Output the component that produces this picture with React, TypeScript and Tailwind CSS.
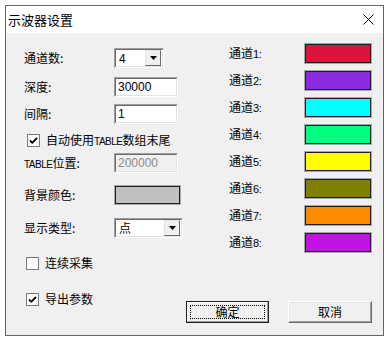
import React from 'react';

const cjk = { fontFamily: '"Noto Sans CJK SC", "Liberation Sans", sans-serif' };

const channels = ['#dc143c', '#8a2be2', '#00ffff', '#00ff7f', '#ffff00', '#808000', '#ff8c00', '#c412e6'];

// Sunken Win32 edit box
function Sunken({ w, h = 20, children, bg = 'bg-white' }: { w: number; h?: number; children?: React.ReactNode; bg?: string }) {
  return (
    <div
      className="border border-t-[#a0a0a0] border-l-[#a0a0a0] border-b-white border-r-white"
      style={{ width: w, height: h }}
    >
      <div className={`flex h-full w-full items-center border border-t-[#696969] border-l-[#696969] border-b-[#e3e3e3] border-r-[#e3e3e3] ${bg}`}>
        {children}
      </div>
    </div>
  );
}

function Combo({ w, value }: { w: number; value: string }) {
  return (
    <Sunken w={w}>
      <span className="flex-1 pl-[3px] text-[12px] leading-none text-black">{value}</span>
      <div className="mr-px flex h-[16px] w-[16px] items-center justify-center border border-t-[#e3e3e3] border-l-[#e3e3e3] border-b-[#696969] border-r-[#696969] bg-[#f0f0f0]">
        <svg width="7" height="4" viewBox="0 0 7 4">
          <path d="M0 0h7L3.5 4z" fill="#000" />
        </svg>
      </div>
    </Sunken>
  );
}

function Check({ checked }: { checked?: boolean }) {
  return (
    <div className="flex h-[13px] w-[13px] shrink-0 items-center justify-center border border-[#7a7a7a] bg-white">
      {checked && (
        <svg width="9" height="9" viewBox="0 0 9 9">
          <path d="M1 4.5l2.3 2.3L8 2" fill="none" stroke="#000" strokeWidth="1.8" />
        </svg>
      )}
    </div>
  );
}

function Label({ children }: { children: React.ReactNode }) {
  return <span className="w-[90px] shrink-0 text-[12px] leading-none text-black">{children}</span>;
}

function Latin({ children, size = 11 }: { children: React.ReactNode; size?: number }) {
  return (
    <span className="tracking-[-0.5px]" style={{ fontFamily: '"Liberation Sans", sans-serif', fontSize: size }}>
      {children}
    </span>
  );
}

function Swatch({ color, w = 68, h = 21 }: { color: string; w?: number; h?: number }) {
  return (
    <div className="border border-[#a8a8a8]" style={{ width: w, height: h }}>
      <div className="h-full w-full border border-[#1e1e1e]" style={{ background: color }} />
    </div>
  );
}

export default function App() {
  return (
    <div className="h-[342px] w-[390px] bg-white pl-[5px] pt-[5px]" style={cjk}>
      <div className="flex h-[331px] w-[379px] flex-col border border-[#646464] bg-[#f0f0f0]">
        {/* title bar */}
        <div className="flex h-[27px] items-center justify-between bg-white pl-[2px] pr-[9px]">
          <span className="text-[13px] text-black">示波器设置</span>
          <svg width="11" height="11" viewBox="0 0 11 11">
            <path d="M0.5 0.5l10 10M10.5 0.5l-10 10" stroke="#000" strokeWidth="1" />
          </svg>
        </div>

        <div className="flex">
          {/* left column */}
          <div className="flex w-[223px] flex-col pl-[18px]">
            <div className="mt-[15px] flex h-[20px] items-center">
              <Label>通道数:</Label>
              <Combo w={50} value="4" />
            </div>
            <div className="mt-[9px] flex h-[20px] items-center">
              <Label>深度:</Label>
              <Sunken w={64}>
                <span className="pl-[2px] text-[12px] leading-none" style={{ fontFamily: '"Liberation Sans", sans-serif' }}>30000</span>
              </Sunken>
            </div>
            <div className="mt-[7px] flex h-[20px] items-center">
              <Label>间隔:</Label>
              <Sunken w={64}>
                <span className="pl-[2px] text-[12px] leading-none" style={{ fontFamily: '"Liberation Sans", sans-serif' }}>1</span>
              </Sunken>
            </div>
            <div className="mt-[8px] flex h-[16px] items-center gap-[6px] pl-[3px]">
              <Check checked />
              <span className="text-[12px] leading-none text-black">
                自动使用<Latin size={10}>TABLE</Latin>数组末尾
              </span>
            </div>
            <div className="mt-[5px] flex h-[20px] items-center">
              <Label>
                <Latin size={10}>TABLE</Latin>位置:
              </Label>
              <Sunken w={64} bg="bg-[#f0f0f0]">
                <span className="pl-[2px] text-[12px] leading-none text-[#8a8a8a]" style={{ fontFamily: '"Liberation Sans", sans-serif' }}>200000</span>
              </Sunken>
            </div>
            <div className="mt-[12px] flex h-[20px] items-center">
              <Label>背景颜色:</Label>
              <Swatch color="#c0c0c0" w={67} h={20} />
            </div>
            <div className="mt-[13px] flex h-[20px] items-center">
              <Label>显示类型:</Label>
              <Combo w={69} value="点" />
            </div>
            <div className="mt-[17px] flex h-[16px] items-center gap-[6px] pl-[2px]">
              <Check />
              <span className="text-[12px] leading-none text-black">连续采集</span>
            </div>
          </div>

          {/* right column */}
          <div className="mt-[10px] flex flex-col gap-[6px]">
            {channels.map((c, i) => (
              <div key={i} className="flex h-[21px] items-center">
                <span className="w-[75px] text-[12px] leading-none text-black">
                  通道<Latin size={11}>{i + 1}:</Latin>
                </span>
                <Swatch color={c} />
              </div>
            ))}
          </div>
        </div>

        {/* bottom row */}
        <div className="flex items-start pl-[20px]">
          <div className="mt-[20px] flex h-[16px] items-center gap-[6px]">
            <Check checked />
            <span className="text-[12px] leading-none text-black">导出参数</span>
          </div>
          <div className="ml-[93px] mt-[30px] h-[22px] w-[83px] border border-[#1e1e1e]">
            <div className="flex h-full w-full items-center justify-center border border-t-white border-l-white border-b-[#a0a0a0] border-r-[#a0a0a0] bg-[#f0f0f0]">
              <div className="flex h-[14px] w-[75px] items-center justify-center border border-dotted border-black text-[12px] leading-none">
                确定
              </div>
            </div>
          </div>
          <div className="ml-[19px] mt-[30px] h-[22px] w-[84px] border border-t-white border-l-white border-b-[#696969] border-r-[#696969]">
            <div className="flex h-full w-full items-center justify-center border border-t-[#e3e3e3] border-l-[#e3e3e3] border-b-[#a0a0a0] border-r-[#a0a0a0] bg-[#f0f0f0] text-[12px] leading-none">
              取消
            </div>
          </div>
        </div>
      </div>
    </div>
  );
}
